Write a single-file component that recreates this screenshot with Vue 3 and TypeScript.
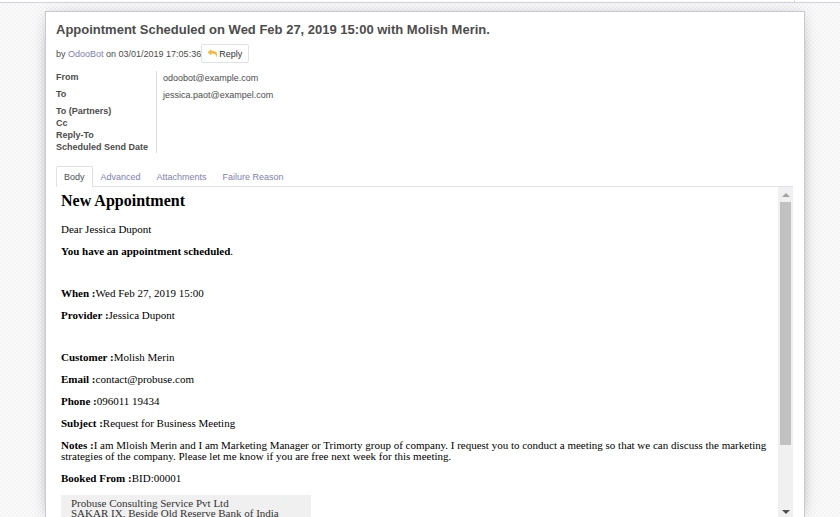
<script setup lang="ts">
import { ref } from 'vue'

interface Field {
  label: string
  value: string
}

interface Line {
  label: string
  text: string
}

const addressed: Field[] = [
  { label: 'From', value: 'odoobot@example.com' },
  { label: 'To', value: 'jessica.paot@exampel.com' },
]
const emptyFields: string[] = ['To (Partners)', 'Cc', 'Reply-To', 'Scheduled Send Date']

const tabs: string[] = ['Body', 'Advanced', 'Attachments', 'Failure Reason']
const activeTab = ref<string>('Body')

const schedule: Line[] = [
  { label: 'When :', text: 'Wed Feb 27, 2019 15:00' },
  { label: 'Provider :', text: 'Jessica Dupont' },
]
const customer: Line[] = [
  { label: 'Customer :', text: 'Molish Merin' },
  { label: 'Email :', text: 'contact@probuse.com' },
  { label: 'Phone :', text: '096011 19434' },
  { label: 'Subject :', text: 'Request for Business Meeting' },
  {
    label: 'Notes :',
    text: 'I am Mloish Merin and I am Marketing Manager or Trimorty group of company. I request you to conduct a meeting so that we can discuss the marketing strategies of the company. Please let me know if you are free next week for this meeting.',
  },
  { label: 'Booked From :', text: 'BID:00001' },
]
</script>

<template>
  <div class="page">
    <div class="topbar"><span class="topbar-mark"></span></div>
    <main class="sheet">
      <h1 class="title">Appointment Scheduled on Wed Feb 27, 2019 15:00 with Molish Merin.</h1>
      <div class="byline">
        <span>by <a href="#">OdooBot</a> on 03/01/2019 17:05:36</span>
        <button type="button" class="reply">
          <svg viewBox="0 0 1792 1792" aria-hidden="true">
            <path
              d="M1792 1120q0 166-127 451-3 7-10.500 24t-13.500 30-13 22q-12 17-28 17-15 0-23.500-10t-8.500-25q0-9 2.500-26.500t2.500-23.500q5-68 5-123 0-101-17.500-181t-48.500-138.500-80-101-105.500-69.500-133-42.500-154-21.500-175.500-6h-224v256q0 26-19 45t-45 19-45-19l-512-512q-19-19-19-45t19-45l512-512q19-19 45-19t45 19 19 45v256h224q713 0 875 403 53 134 53 333z"
            />
          </svg>
          <span>Reply</span>
        </button>
      </div>

      <dl class="fields">
        <div v-for="field in addressed" :key="field.label" class="field">
          <dt>{{ field.label }}</dt>
          <dd>{{ field.value }}</dd>
        </div>
        <div v-for="label in emptyFields" :key="label" class="field compact">
          <dt>{{ label }}</dt>
          <dd></dd>
        </div>
      </dl>

      <div class="tabs" role="tablist">
        <button
          v-for="tab in tabs"
          :key="tab"
          type="button"
          role="tab"
          class="tab"
          :class="{ active: tab === activeTab }"
          :aria-selected="tab === activeTab"
          @click="activeTab = tab"
        >
          {{ tab }}
        </button>
      </div>

      <div class="pane">
        <article class="mail">
          <h2>New Appointment</h2>
          <p>Dear Jessica Dupont</p>
          <p><b>You have an appointment scheduled</b>.</p>
          <div class="blank"></div>
          <p v-for="line in schedule" :key="line.label"><b>{{ line.label }}</b>{{ line.text }}</p>
          <div class="blank"></div>
          <p v-for="line in customer" :key="line.label"><b>{{ line.label }}</b>{{ line.text }}</p>
          <address class="company">
            Probuse Consulting Service Pvt Ltd<br />
            SAKAR IX, Beside Old Reserve Bank of India
          </address>
        </article>
        <div class="scrollbar" aria-hidden="true">
          <svg class="arrow up" viewBox="0 0 8 4"><path d="M4 0L8 4H0z" /></svg>
          <div class="track"><div class="thumb"></div></div>
          <svg class="arrow down" viewBox="0 0 8 4"><path d="M0 0H8L4 4z" /></svg>
        </div>
      </div>
    </main>
  </div>
</template>

<style>
body {
  background: #f8f8f8;
}
</style>

<style scoped>
.page {
  display: flex;
  flex-direction: column;
  height: 100vh;
  overflow: hidden;
  color: #4c4c4c;
  font-family: 'Liberation Sans', Arial, sans-serif;
  font-size: 9px;
  line-height: 12px;
  background-color: #fbfbfb;
  background-image: conic-gradient(#f3f3f3 25%, transparent 0 50%, #f3f3f3 0 75%, transparent 0);
  background-size: 4px 4px;
}

.topbar {
  display: flex;
  flex: none;
  justify-content: flex-end;
  height: 2px;
  padding-right: 45px;
  background: #fff;
  border-bottom: 1px solid #ced4dd;
}

.topbar-mark {
  width: 1px;
  background: #d5dae2;
}

.sheet {
  display: flex;
  flex: 1;
  flex-direction: column;
  min-height: 0;
  box-sizing: border-box;
  margin: 8px 35px 0 45px;
  padding: 10px 11px 0 10px;
  background: #fff;
  border: 1px solid #c8c8d3;
  border-bottom: 0;
  box-shadow: 0 5px 20px -15px #000, 0 0 12px rgba(0, 0, 0, 0.1);
}

.title {
  margin: 0;
  font-size: 13px;
  line-height: 16px;
}

.byline {
  display: flex;
  align-items: center;
  margin-top: 6px;
}

a,
.tab {
  color: #8180b2;
  text-decoration: none;
}

.reply {
  display: flex;
  gap: 2px;
  align-items: center;
  height: 19px;
  padding: 0 6px;
  color: #333;
  font: inherit;
  background: #fff;
  border: 1px solid #dee2e6;
  border-radius: 2px;
}

.reply svg {
  width: 9px;
  height: 9px;
  fill: #fdb42f;
}

.fields {
  margin: 8px 0 0;
}

.field {
  display: grid;
  grid-template-columns: 101px 1fr;
  line-height: 12px;
}

.field dt {
  padding-bottom: 5px;
  font-weight: bold;
  border-right: 1px solid #ddd;
}

.field dd {
  margin: 0;
  padding: 1px 0 0 6px;
}

.compact dt {
  padding-bottom: 0;
}

.tabs {
  display: flex;
  flex: none;
  margin-top: 13px;
  border-bottom: 1px solid #dee2e6;
}

.tab {
  height: 20px;
  margin-bottom: -1px;
  padding: 0 7px;
  font: inherit;
  background: none;
  border: 1px solid transparent;
  border-bottom: 0;
  border-radius: 2px 2px 0 0;
}

.tab.active {
  height: 21px;
  color: #495057;
  background: #fff;
  border-color: #dee2e6;
}

.pane {
  display: flex;
  flex: 1;
  min-height: 0;
}

.mail {
  flex: 1;
  padding: 5px;
  overflow: hidden;
  color: #000;
  font-family: 'Liberation Serif', 'Times New Roman', serif;
  font-size: 11px;
  line-height: 11px;
}

.mail h2 {
  margin: 0 0 14px;
  font-size: 16px;
  line-height: 18px;
}

.mail p {
  margin: 0 0 11px;
}

.blank {
  height: 20px;
}

.company {
  box-sizing: border-box;
  width: 250px;
  padding: 3px 10px;
  color: #333;
  font-style: normal;
  line-height: 10px;
  background: #f0f0f0;
}

.scrollbar {
  display: flex;
  flex: none;
  flex-direction: column;
  align-items: center;
  box-sizing: border-box;
  width: 15px;
  padding: 6px 0 3px;
  background: #f0f0f0;
}

.arrow {
  width: 8px;
  height: 4px;
}

.up {
  fill: #a3a3a3;
}

.down {
  fill: #505050;
}

.track {
  flex: 1;
  width: 11px;
  margin: 5px 0 4px;
}

.thumb {
  height: 80%;
  background: #c1c1c1;
}
</style>
